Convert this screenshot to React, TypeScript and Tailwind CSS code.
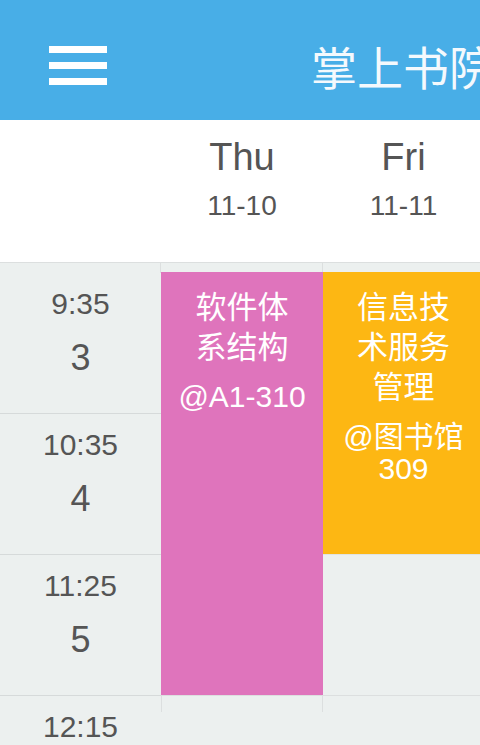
export default function App() {
  const slots = [
    { time: "9:35", n: "3" },
    { time: "10:35", n: "4" },
    { time: "11:25", n: "5" },
    { time: "12:15", n: "6" },
  ];
  return (
    <div className="w-[480px] h-[745px] overflow-hidden bg-[#ecf0ef] text-[#555] font-['Liberation_Sans','Noto_Sans_CJK_SC',sans-serif]">
      <header className="h-[120px] bg-[#48aee7] pt-[10px] flex items-center">
        <div className="ml-[49px] shrink-0 flex flex-col gap-[9px]">
          <span className="block h-[7px] w-[58px] bg-white" />
          <span className="block h-[7px] w-[58px] bg-white" />
          <span className="block h-[7px] w-[58px] bg-white" />
        </div>
        <h1 className="ml-[204px] shrink-0 whitespace-nowrap text-[46px] leading-[46px] font-normal text-[#f4f9fd] font-['Noto_Sans_CJK_SC',sans-serif]">
          掌上书院
        </h1>
      </header>

      <div className="h-[142px] bg-white flex">
        <div className="w-[161px] shrink-0" />
        <div className="w-[162px] shrink-0 flex flex-col items-center pt-[18px]">
          <div className="text-[38px] leading-[38px]">Thu</div>
          <div className="mt-[16px] text-[28px] leading-[28px]">11-10</div>
        </div>
        <div className="w-[161px] shrink-0 flex flex-col items-center pt-[18px]">
          <div className="text-[38px] leading-[38px]">Fri</div>
          <div className="mt-[16px] text-[28px] leading-[28px]">11-11</div>
        </div>
      </div>

      <div className="flex border-t border-[#dcdfdf]">
        <div className="w-[161px] shrink-0">
          <div className="h-[10px] border-r border-[#dcdfdf]" />
          {slots.map((s, i) => (
            <div
              key={s.time}
              className={`h-[141px] flex flex-col items-center pt-[16px] ${i < 3 ? "border-b border-[#d6dada]" : ""}`}
            >
              <div className="text-[30px] leading-[30px]">{s.time}</div>
              <div className="mt-[21px] text-[36px] leading-[36px]">{s.n}</div>
            </div>
          ))}
        </div>

        <div className="w-[162px] shrink-0 flex flex-col">
          <div className="h-[9px] border-r border-[#dcdfdf]" />
          <div className="h-[423px] bg-[#df74bc] text-white flex flex-col items-center pt-[13px]">
            <div className="text-center text-[31px] leading-[40px] font-['Noto_Sans_CJK_SC',sans-serif]">
              软件体
              <br />
              系结构
            </div>
            <div className="mt-[16px] text-center text-[30px] leading-[32px]">@A1-310</div>
          </div>
          <div className="h-[17px] border-t border-l border-r border-[#dcdfdf]" />
        </div>

        <div className="w-[161px] shrink-0 flex flex-col">
          <div className="h-[9px]" />
          <div className="h-[282px] bg-[#fdb713] text-white flex flex-col items-center pt-[13px]">
            <div className="text-center text-[31px] leading-[40px] font-['Noto_Sans_CJK_SC',sans-serif]">
              信息技
              <br />
              术服务
              <br />
              管理
            </div>
            <div className="mt-[16px] text-center text-[30px] leading-[32px]">
              @图书馆
              <br />
              309
            </div>
          </div>
          <div className="h-[141px] border-t border-[#e0e3e3]" />
          <div className="h-[17px] border-t border-r border-[#dcdfdf]" />
        </div>
      </div>
    </div>
  );
}
